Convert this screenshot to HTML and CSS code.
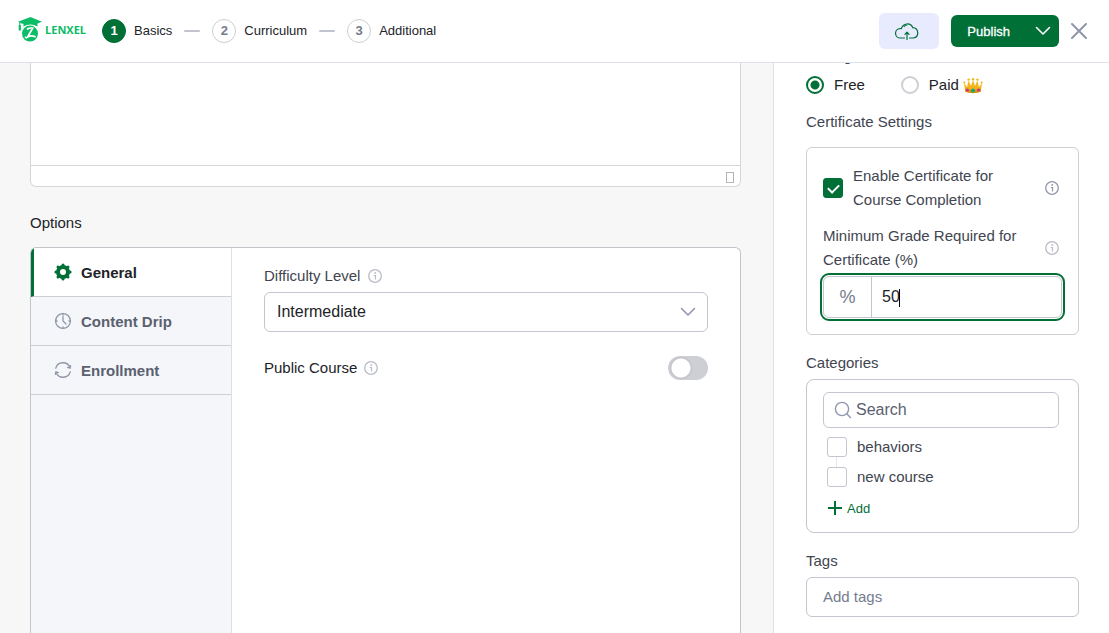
FILE: index.html
```html
<!DOCTYPE html>
<html lang="en">

<head>
    <meta charset="UTF-8">
    <meta name="viewport" content="width=device-width, initial-scale=1.0">
    <title>Course Builder</title>
    <link rel="stylesheet" href="styles.css">
</head>

<body>
    <svg class="sprite" aria-hidden="true">
        <symbol id="icon-info" viewBox="0 0 14 14">
            <circle cx="7" cy="7" r="6.3" fill="none" stroke="currentColor" stroke-width="1.3" />
            <path d="M5.8 6.5H7.5V10.5" fill="none" stroke="currentColor" stroke-width="1.2" />
            <path d="M6.4 3.2H8.1V4.8H6.4Z" fill="currentColor" />
        </symbol>
    </svg>

    <header class="header">
        <a href="#" class="logo">
            <svg class="logo-mark" viewBox="0 0 24 25" width="24" height="25">
                <path d="M0 4.8L12.5 0L24 4.8L19.5 6.6V9.6Q12.5 5.2 5.5 9.6V7L2.3 5.9V10.5H1.3V5.5Z" fill="#0cbc66" />
                <path d="M0.7 8H2.9V13.5H0.7Z" fill="#0cbc66" />
                <circle cx="12" cy="16.6" r="8" fill="#0cbc66" />
                <path d="M9.5 12Q11.5 10.6 14.6 11.2Q12.4 15 9.6 20Q13 18 17 19.6" fill="none" stroke="#fff" stroke-width="1.7" stroke-linecap="round" />
                <path d="M9.8 20Q8 21.4 7 19.6" fill="none" stroke="#fff" stroke-width="1.2" />
            </svg>
            <span class="logo-text">LENXEL</span>
        </a>
        <nav class="steps">
            <a href="#" class="step"><span class="step-number active">1</span>Basics</a>
            <span class="dash"></span>
            <a href="#" class="step"><span class="step-number">2</span>Curriculum</a>
            <span class="dash"></span>
            <a href="#" class="step"><span class="step-number">3</span>Additional</a>
        </nav>
        <div class="actions">
            <button type="button" class="cloud-btn" aria-label="Save draft">
                <svg viewBox="0 0 24 20" width="24" height="20" fill="none" stroke="#007037" stroke-width="1.2" stroke-linecap="round" stroke-linejoin="round">
                    <path d="M9.5 17H5.5A4.7 4.7 0 0 1 5 7.6Q5.8 7.4 6.4 7.6A6 6 0 0 1 17.8 6.7A5.2 5.2 0 0 1 18.5 17H14.5" />
                    <path d="M9 5.6Q10 4.3 11.8 4M12 18.5V11.5M9.9 13.3L12 11.2L14.1 13.3" />
                </svg>
            </button>
            <div class="publish">
                <button type="button" class="publish-btn">Publish</button>
                <button type="button" class="publish-more" aria-label="More options">
                    <svg viewBox="0 0 16 10" width="16" height="10" fill="none" stroke="#fff" stroke-width="1.6" stroke-linecap="round" stroke-linejoin="round">
                        <path d="M1.5 1.5L8 8L14.5 1.5" />
                    </svg>
                </button>
            </div>
            <button type="button" class="close-btn" aria-label="Close">
                <svg viewBox="0 0 16 16" width="16" height="16" fill="none" stroke="#9197a8" stroke-width="2" stroke-linecap="round">
                    <path d="M1 1L15 15M15 1L1 15" />
                </svg>
            </button>
        </div>
    </header>

    <div class="page">
        <main class="content">
            <div class="editor">
                <textarea class="editor-text" aria-label="Description"></textarea>
                <div class="editor-status"><span class="resize"></span></div>
            </div>

            <h2 class="section-title">Options</h2>
            <div class="options">
                <div class="tabs">
                    <button type="button" class="tab active">
                        <svg viewBox="0 0 18 18" width="18" height="18">
                            <circle cx="9" cy="9" r="5" fill="none" stroke="#007037" stroke-width="4" />
                            <path d="M9 1.9V3.6M9 14.4V16.1M1.9 9H3.6M14.4 9H16.1M4 4L5 5M13 13L14 14M4 14L5 13M13 5L14 4" stroke="#007037" stroke-width="3" stroke-linecap="round" />
                        </svg>
                        General
                    </button>
                    <button type="button" class="tab">
                        <svg viewBox="0 0 18 18" width="18" height="18" fill="none" stroke="#9197a8" stroke-width="1.3" stroke-linecap="round">
                            <circle cx="9" cy="9" r="7.4" />
                            <path d="M9 4.5V9L12 12M9 1.5V3M9 15V16.5M1.5 9H3M15 9H16.5" />
                        </svg>
                        Content Drip
                    </button>
                    <button type="button" class="tab">
                        <svg viewBox="0 0 18 18" width="18" height="18" fill="none" stroke="#9197a8" stroke-width="1.3" stroke-linecap="round" stroke-linejoin="round">
                            <path d="M1.7 7.2A7.5 7.5 0 0 1 16 6.8M16.3 10.8A7.5 7.5 0 0 1 2 11.2" />
                            <path d="M16.6 4.6L16.1 7.1L13.6 6.4M1.4 13.4L1.9 10.9L4.4 11.6" />
                        </svg>
                        Enrollment
                    </button>
                </div>
                <div class="tab-panel">
                    <div class="label-row">
                        <label for="difficulty">Difficulty Level</label>
                        <svg class="info light" width="14" height="14"><use href="#icon-info" /></svg>
                    </div>
                    <div class="select-wrap">
                        <select id="difficulty">
                            <option>Intermediate</option>
                            <option>Beginner</option>
                            <option>Expert</option>
                        </select>
                        <svg class="chevron" viewBox="0 0 16 10" width="16" height="10" fill="none" stroke="#9197b0" stroke-width="1.6" stroke-linecap="round" stroke-linejoin="round">
                            <path d="M1.5 1.5L8 8L14.5 1.5" />
                        </svg>
                    </div>
                    <div class="public-row">
                        <label for="public">Public Course</label>
                        <svg class="info light" width="14" height="14"><use href="#icon-info" /></svg>
                        <input type="checkbox" id="public" class="switch">
                    </div>
                </div>
            </div>
        </main>

        <aside class="sidebar">
            <div class="pricing-title">Pricing Model</div>
            <div class="pricing">
                <label class="price"><input type="radio" name="price" class="radio" checked>Free</label>
                <label class="price"><input type="radio" name="price" class="radio"><span class="paid">Paid
                    <svg viewBox="0 0 20 18" width="20" height="18">
                        <path d="M1 7L4 11L5.6 4.5L8 10L10 4L12 10L14.4 4.5L16 11L19 7L17.8 15.5Q10 18.5 2.2 15.5Z" fill="#f3b51b" />
                        <path d="M2 12.5Q10 15.4 18 12.5L17.7 15.8Q10 18.6 2.3 15.8Z" fill="#d8940f" />
                        <g fill="#f0b820">
                            <circle cx="1.3" cy="6.6" r="1.1" />
                            <circle cx="5.6" cy="3.6" r="1.2" />
                            <circle cx="10" cy="3.2" r="1.2" />
                            <circle cx="14.4" cy="3.6" r="1.2" />
                            <circle cx="18.7" cy="6.6" r="1.1" />
                        </g>
                        <circle cx="10" cy="14.5" r="2" fill="#13a679" />
                        <circle cx="4.4" cy="14" r="1.6" fill="#d82c86" />
                        <circle cx="15.6" cy="14" r="1.6" fill="#d82c86" />
                    </svg></span></label>
            </div>

            <h3 class="certificate-title">Certificate Settings</h3>
            <div class="card certificate">
                <div class="card-row">
                    <input type="checkbox" id="certificate" class="checkbox" checked>
                    <label for="certificate">Enable Certificate for Course Completion</label>
                    <svg class="info" width="14" height="14"><use href="#icon-info" /></svg>
                </div>
                <div class="card-row">
                    <label for="grade">Minimum Grade Required for Certificate (%)</label>
                    <svg class="info light" width="14" height="14"><use href="#icon-info" /></svg>
                </div>
                <div class="grade">
                    <span class="percent">%</span>
                    <input type="text" id="grade" value="50">
                    <span class="caret"></span>
                </div>
            </div>

            <h3 class="field-title">Categories</h3>
            <div class="card categories">
                <div class="search">
                    <svg viewBox="0 0 18 18" width="18" height="18" fill="none" stroke="#9197b0" stroke-width="1.4" stroke-linecap="round">
                        <circle cx="8" cy="8" r="6.6" />
                        <path d="M12.8 12.8L16.4 16.4" />
                    </svg>
                    <input type="text" placeholder="Search" aria-label="Search categories">
                </div>
                <div class="category-list">
                    <label class="category"><input type="checkbox" class="checkbox">behaviors</label>
                    <span class="branch"></span>
                    <label class="category"><input type="checkbox" class="checkbox">new course</label>
                </div>
                <button type="button" class="add-btn">
                    <svg viewBox="0 0 14 14" width="14" height="14" stroke="#007037" stroke-width="2">
                        <path d="M7 0V14M0 7H14" />
                    </svg>
                    Add
                </button>
            </div>

            <label for="tags" class="field-title">Tags</label>
            <input type="text" id="tags" class="tags" placeholder="Add tags">
        </aside>
    </div>
</body>

</html>
```
FILE: styles.css
```css
* {
    box-sizing: border-box;
}

body {
    margin: 0;
    height: 100vh;
    display: flex;
    flex-direction: column;
    overflow: hidden;
    background-color: #f7f7f7;
    color: #212327;
    font-family: "Liberation Sans", Arial, sans-serif;
    font-size: 15px;
    line-height: 24px;
}

button,
input,
select,
textarea {
    margin: 0;
    font-family: inherit;
    font-size: 16px;
    color: inherit;
}

button {
    padding: 0;
    border: none;
    background: none;
    cursor: pointer;
}

a {
    color: inherit;
    text-decoration: none;
}

svg {
    display: block;
    flex-shrink: 0;
}

h2,
h3 {
    margin: 0;
    font-size: 15px;
    font-weight: normal;
}

.sprite {
    display: none;
}

/* header */
.header {
    display: flex;
    align-items: center;
    flex-shrink: 0;
    height: 63px;
    padding: 0 22px 0 18px;
    background-color: #fff;
    border-bottom: 1px solid #dfe0ea;
}

.logo {
    display: flex;
    align-items: center;
    gap: 3px;
    width: 84px;
    padding-bottom: 3px;
}

.logo-text {
    color: #0cbc66;
    font-family: "Open Sans", sans-serif;
    font-size: 11px;
    font-weight: 700;
}

.steps {
    display: flex;
    align-items: center;
    gap: 12px;
    font-size: 13px;
}

.step {
    display: flex;
    align-items: center;
    gap: 8px;
}

.step-number {
    width: 24px;
    height: 24px;
    border: 1px solid #cdcfd5;
    border-radius: 50%;
    color: #757c8e;
    font-weight: bold;
    line-height: 22px;
    text-align: center;
}

.step-number.active {
    background-color: #007037;
    border-color: #007037;
    color: #fff;
}

.dash {
    width: 16px;
    height: 2px;
    border-radius: 1px;
    background-color: #c0c4ce;
}

.actions {
    display: flex;
    align-items: center;
    gap: 12px;
    margin-left: auto;
}

.cloud-btn {
    display: flex;
    align-items: center;
    justify-content: center;
    width: 60px;
    height: 36px;
    padding-right: 4px;
    border-radius: 6px;
    background-color: #e8ebfd;
}

.publish {
    display: flex;
    height: 32px;
    border-radius: 6px;
    background-color: #007037;
}

.publish-btn {
    padding: 0 17px 0 16px;
    color: #fff;
    font-size: 13px;
    -webkit-text-stroke: 0.3px #fff;
}

.publish-more {
    display: flex;
    align-items: center;
    padding: 0 8px;
}

/* page */
.page {
    display: flex;
    flex: 1;
    min-height: 0;
    overflow: hidden;
}

.content {
    display: flex;
    flex: 1;
    flex-direction: column;
    min-width: 0;
    padding: 0 32px 0 30px;
}

.editor {
    flex-shrink: 0;
    border: 1px solid #d5d6db;
    border-top: none;
    border-radius: 0 0 6px 6px;
    background-color: #fff;
}

.editor-text {
    display: block;
    width: 100%;
    height: 102px;
    border: none;
    outline: none;
    resize: none;
    background: none;
}

.editor-status {
    display: flex;
    align-items: center;
    justify-content: flex-end;
    height: 21px;
    padding: 2px 6px 0 0;
    border-top: 1px solid #d5d6db;
}

.resize {
    width: 8px;
    height: 11px;
    border: 1px solid #b5b5b5;
}

.section-title {
    margin: 24px 0 12px;
}

.options {
    display: flex;
    flex: 1;
    border: 1px solid #c3c5cb;
    border-bottom: none;
    border-radius: 6px 6px 0 0;
    background-color: #fff;
    overflow: hidden;
}

.tabs {
    width: 201px;
    border-right: 1px solid #dcdfe5;
    background-color: #f4f6fa;
}

.tab {
    display: flex;
    align-items: center;
    gap: 9px;
    width: 100%;
    height: 49px;
    padding: 0 23px;
    border-bottom: 1px solid #cdcfd5;
    color: #5b616f;
    font-size: 15px;
    font-weight: bold;
}

.tab.active {
    padding-left: 20px;
    border-left: 3px solid #007037;
    background-color: #fff;
    color: #212327;
}

.tab-panel {
    flex: 1;
    padding: 16px 32px;
}

.label-row,
.public-row {
    display: flex;
    align-items: center;
    gap: 7px;
}

.label-row {
    margin-bottom: 4px;
    color: #41454f;
}

.info {
    color: #9197a8;
}

.info.light {
    color: #b9bcc6;
}

.label-row .info {
    margin-left: 1px;
}

.select-wrap {
    position: relative;
    margin-bottom: 24px;
}

.select-wrap select {
    display: block;
    width: 100%;
    height: 40px;
    padding: 0 40px 2px 12px;
    border: 1px solid #c3c5cf;
    border-radius: 6px;
    appearance: none;
    background-color: #fff;
}

.chevron {
    position: absolute;
    top: 15px;
    right: 12px;
    pointer-events: none;
}

.switch {
    width: 40px;
    height: 24px;
    margin-left: auto;
    border-radius: 12px;
    appearance: none;
    background: radial-gradient(circle at 13px 12px, #fff 9px, #c3c5cb 10px, #cdcfd5 12px);
}

/* sidebar */
.sidebar {
    width: 336px;
    flex-shrink: 0;
    padding: 0 30px 0 32px;
    border-left: 1px solid #dfe0ea;
    background-color: #fff;
    color: #41454f;
}

/* scrolled partly under the header */
.pricing-title {
    margin: -19px 0 5px;
}

.pricing {
    display: flex;
    gap: 36px;
    color: #212327;
}

.price {
    display: flex;
    align-items: center;
    gap: 10px;
}

.radio {
    width: 18px;
    height: 18px;
    border: 2px solid #cdcfd5;
    border-radius: 50%;
    appearance: none;
}

.radio:checked {
    border-color: #007037;
    background: radial-gradient(circle, #007037 4px, #fff 5px);
}

.paid {
    display: flex;
    align-items: center;
    gap: 4px;
}

.certificate-title {
    margin: 13px 0;
}

.card {
    border: 1px solid #cdcfd5;
    border-radius: 6px;
}

.certificate {
    padding: 16px;
}

.card-row {
    display: flex;
    align-items: center;
    gap: 10px;
    margin-bottom: 12px;
    padding-right: 3px;
}

.card-row label {
    flex: 1;
}

.card-row + .card-row {
    margin-bottom: 4px;
}

.checkbox {
    flex-shrink: 0;
    width: 20px;
    height: 20px;
    border: 1px solid #c3c5cf;
    border-radius: 3px;
    appearance: none;
    background-color: #fff;
}

.checkbox:checked {
    display: flex;
    justify-content: center;
    padding-top: 5px;
    border-color: #007037;
    background-color: #007037;
}

.checkbox:checked::before {
    content: "";
    width: 9px;
    height: 5px;
    border: solid #fff;
    border-width: 0 0 2px 2px;
    transform: rotate(-45deg);
}

.grade {
    position: relative;
    display: flex;
    height: 42px;
    border: 1px solid #c3c5cf;
    border-radius: 6px;
    outline: 2px solid #007037;
    outline-offset: 1px;
}

.percent {
    width: 48px;
    border-right: 1px solid #c3c5cf;
    color: #757c8e;
    font-size: 18px;
    line-height: 40px;
    text-align: center;
}

.grade input {
    flex: 1;
    min-width: 0;
    padding: 0 10px;
    border: none;
    outline: none;
    background: none;
    color: #212327;
}

.caret {
    position: absolute;
    top: 12px;
    left: 75px;
    width: 1px;
    height: 18px;
    background-color: #000;
}

.field-title {
    display: block;
    margin: 16px 0 4px;
}

.categories {
    padding: 12px 19px 12px 16px;
    border-color: #c3c5cf;
    border-radius: 8px;
}

.search {
    display: flex;
    align-items: center;
    gap: 4px;
    height: 36px;
    padding: 0 10px;
    border: 1px solid #c3c5cf;
    border-radius: 6px;
}

.search input {
    flex: 1;
    min-width: 0;
    padding: 0;
    border: none;
    outline: none;
    background: none;
}

.search input::placeholder {
    color: #5b616f;
}

.category-list {
    display: flex;
    flex-direction: column;
    padding: 9px 4px;
}

.category {
    display: flex;
    align-items: center;
    gap: 10px;
    height: 20px;
}

.branch {
    width: 1px;
    height: 10px;
    margin-left: 9px;
    background-color: #e3e5ec;
}

.add-btn {
    display: flex;
    align-items: center;
    gap: 5px;
    height: 24px;
    padding: 0 5px;
    color: #007037;
    font-size: 13px;
}

.tags {
    display: block;
    width: 100%;
    height: 40px;
    padding: 0 16px 2px;
    border: 1px solid #c3c5cf;
    border-radius: 6px;
    outline: none;
    font-size: 15px;
}

.tags::placeholder {
    color: #757c8e;
}
```
